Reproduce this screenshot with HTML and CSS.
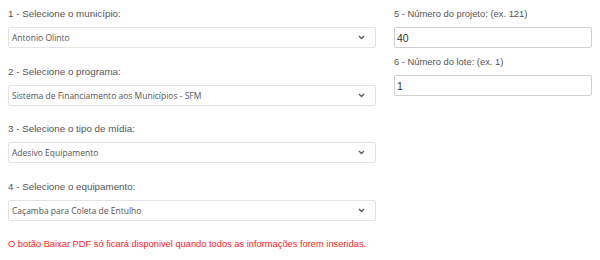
FILE: index.html
```html
<!DOCTYPE html>
<html lang="pt-BR">
<head>
    <meta charset="UTF-8">
    <meta name="viewport" content="width=device-width, initial-scale=1.0">
    <title>Baixar PDF</title>
    <link rel="stylesheet" href="styles.css">
</head>
<body>
    <div class="form-row">
        <div class="col-left">
            <div class="group">
                <label>1 - Selecione o município:</label>
                <div class="select">
                    <span>Antonio Olinto</span>
                    <svg class="chevron" width="7" height="5" viewBox="0 0 7 5"><path d="M1 1 L3.5 3.5 L6 1" fill="none" stroke="#555" stroke-width="1.3"/></svg>
                </div>
            </div>
            <div class="group">
                <label>2 - Selecione o programa:</label>
                <div class="select">
                    <span>Sistema de Financiamento aos Municípios - SFM</span>
                    <svg class="chevron" width="7" height="5" viewBox="0 0 7 5"><path d="M1 1 L3.5 3.5 L6 1" fill="none" stroke="#555" stroke-width="1.3"/></svg>
                </div>
            </div>
            <div class="group">
                <label>3 - Selecione o tipo de mídia:</label>
                <div class="select">
                    <span>Adesivo Equipamento</span>
                    <svg class="chevron" width="7" height="5" viewBox="0 0 7 5"><path d="M1 1 L3.5 3.5 L6 1" fill="none" stroke="#555" stroke-width="1.3"/></svg>
                </div>
            </div>
            <div class="group">
                <label>4 - Selecione o equipamento:</label>
                <div class="select">
                    <span>Caçamba para Coleta de Entulho</span>
                    <svg class="chevron" width="7" height="5" viewBox="0 0 7 5"><path d="M1 1 L3.5 3.5 L6 1" fill="none" stroke="#555" stroke-width="1.3"/></svg>
                </div>
            </div>
            <p class="warning">O botão Baixar PDF só ficará disponivel quando todos as informações forem inseridas.</p>
        </div>
        <div class="col-right">
            <div class="group small">
                <label>5 - Número do projeto: (ex. 121)</label>
                <input type="text" value="40">
            </div>
            <div class="group small">
                <label>6 - Número do lote: (ex. 1)</label>
                <input type="text" value="1">
            </div>
        </div>
    </div>
</body>
</html>
```

FILE: styles.css
```css
* {
    margin: 0;
    padding: 0;
    box-sizing: border-box;
}

body {
    font-family: 'Liberation Sans', Arial, sans-serif;
    background: #fff;
    color: #555;
}

.form-row {
    display: grid;
    grid-template-columns: 368px 198px;
    gap: 18px;
    padding: 7px 8px 0;
}

.group {
    margin-bottom: 16.6px;
}

.group.small {
    margin-bottom: 7px;
}

label {
    display: block;
    font-size: 9.8px;
    line-height: 14px;
    margin-bottom: 6px;
    color: #555;
}

.group.small label {
    font-size: 9.4px;
}

.select {
    height: 21px;
    border: 1px solid #e3e3e3;
    border-radius: 2px;
    display: flex;
    align-items: center;
    justify-content: space-between;
    padding: 0 10px 0 3px;
    font-family: 'Open Sans', sans-serif;
    font-size: 8.5px;
    color: #555;
}

.chevron {
    display: block;
}

input {
    display: block;
    width: 100%;
    height: 21px;
    border: 1px solid #cfcfcf;
    border-radius: 2px;
    padding: 0 2px;
    font-family: 'Liberation Sans', Arial, sans-serif;
    font-size: 10.5px;
    color: #333;
    outline: none;
}

.warning {
    margin-top: 16px;
    font-size: 9.3px;
    line-height: 14px;
    color: #f22;
    white-space: nowrap;
}
```
